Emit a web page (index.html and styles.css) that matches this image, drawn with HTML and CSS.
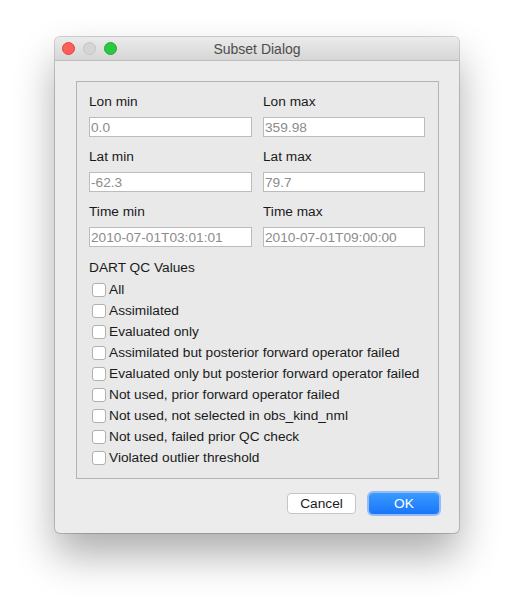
FILE: index.html
```html
<!DOCTYPE html>
<html>
<head>
<meta charset="utf-8">
<link rel="stylesheet" href="styles.css">
</head>
<body>
<div class="window">
  <div class="titlebar">
    <div class="lights">
      <span class="light red"></span>
      <span class="light gray"></span>
      <span class="light green"></span>
    </div>
    <div class="title">Subset Dialog</div>
  </div>
  <div class="content">
    <div class="group">
      <div class="grid">
        <div class="field"><div class="label">Lon min</div><div class="input">0.0</div></div>
        <div class="field"><div class="label">Lon max</div><div class="input">359.98</div></div>
        <div class="field"><div class="label">Lat min</div><div class="input">-62.3</div></div>
        <div class="field"><div class="label">Lat max</div><div class="input">79.7</div></div>
        <div class="field"><div class="label">Time min</div><div class="input">2010-07-01T03:01:01</div></div>
        <div class="field"><div class="label">Time max</div><div class="input">2010-07-01T09:00:00</div></div>
      </div>
      <div class="label qc">DART QC Values</div>
      <div class="checks">
        <div class="check"><span class="box"></span><span>All</span></div>
        <div class="check"><span class="box"></span><span>Assimilated</span></div>
        <div class="check"><span class="box"></span><span>Evaluated only</span></div>
        <div class="check"><span class="box"></span><span>Assimilated but posterior forward operator failed</span></div>
        <div class="check"><span class="box"></span><span>Evaluated only but posterior forward operator failed</span></div>
        <div class="check"><span class="box"></span><span>Not used, prior forward operator failed</span></div>
        <div class="check"><span class="box"></span><span>Not used, not selected in obs_kind_nml</span></div>
        <div class="check"><span class="box"></span><span>Not used, failed prior QC check</span></div>
        <div class="check"><span class="box"></span><span>Violated outlier threshold</span></div>
      </div>
    </div>
    <div class="buttons">
      <div class="btn cancel">Cancel</div>
      <div class="btn ok">OK</div>
    </div>
  </div>
</div>
</body>
</html>
```
FILE: styles.css
```css
* { box-sizing: border-box; }
html, body { margin: 0; padding: 0; background: #ffffff; }
body {
  font-family: "Liberation Sans", Arial, sans-serif;
  font-size: 13.7px;
  color: #1a1a1a;
  padding: 37px 0 0 55px;
  height: 608px;
  overflow: hidden;
}
.window {
  width: 404px;
  height: 496px;
  background: #ececec;
  border-radius: 5px;
  box-shadow: 0 0 0 1px rgba(0,0,0,0.18), 0 22px 40px rgba(0,0,0,0.32);
  overflow: hidden;
  display: flex;
  flex-direction: column;
}
.titlebar {
  height: 24px;
  flex: none;
  background: linear-gradient(#ebebeb, #d6d6d6);
  border-bottom: 1px solid #bdbdbd;
  display: flex;
  align-items: center;
  position: relative;
}
.lights { display: flex; gap: 8px; padding-left: 7px; position: relative; z-index: 1; }
.light {
  width: 13px; height: 13px; border-radius: 50%;
  display: block;
}
.red { background: #fc5f57; border: 1px solid #e0443e; }
.gray { background: #d5d5d5; border: 1px solid #c3c3c3; }
.green { background: #2ac940; border: 1px solid #1ea932; }
.title {
  position: absolute; left: 0; right: 0; top: 0; bottom: 0;
  text-align: center; line-height: 24px;
  color: #4d4d4d; font-size: 14px;
}
.content {
  padding: 20px 20px 0 21px;
  display: flex;
  flex-direction: column;
}
.group {
  height: 398px;
  border: 1px solid #b4b4b4;
  background: #e9e9e9;
  padding: 11px 12px 0 12px;
}
.grid {
  display: grid;
  grid-template-columns: 163px 162px;
  column-gap: 11px;
  row-gap: 11px;
}
.label { height: 17px; line-height: 17px; color: #1a1a1a; white-space: nowrap; }
.input {
  margin-top: 7px;
  height: 20px;
  background: #ffffff;
  border: 1px solid #bcbcbc;
  color: #8c8c8c;
  line-height: 19px;
  padding-left: 1px;
  white-space: nowrap;
  overflow: hidden;
}
.qc { margin-top: 12px; }
.checks { margin-top: 3px; padding-left: 3px; }
.check { height: 21px; display: flex; align-items: center; gap: 3px; white-space: nowrap; }
.box {
  width: 14px; height: 14px;
  background: #ffffff;
  border: 1px solid #b0b0b0;
  border-radius: 3px;
  flex: none;
}
.buttons {
  margin-top: 14px;
  display: flex;
  justify-content: flex-end;
  gap: 13px;
}
.btn {
  height: 21px;
  line-height: 21px;
  text-align: center;
  border-radius: 4px;
}
.cancel {
  width: 69px;
  background: #ffffff;
  border: 1px solid #c5c5c5;
  line-height: 20px;
  color: #1a1a1a;
}
.ok {
  width: 70px;
  background: linear-gradient(#3a9bff, #1a75fa);
  color: #ffffff;
  box-shadow: 0 0 0 2px rgba(80,150,255,0.55);
}
```
